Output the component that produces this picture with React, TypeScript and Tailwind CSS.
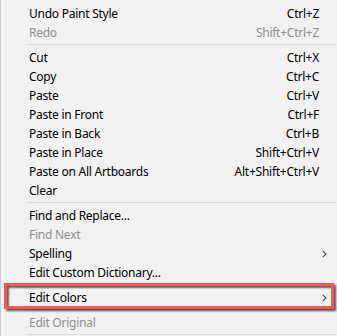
import React from "react";

type Item =
  | { kind: "sep" }
  | { kind: "item"; label: string; shortcut?: string; disabled?: boolean; sub?: boolean; highlight?: boolean };

const items: Item[] = [
  { kind: "item", label: "Undo Paint Style", shortcut: "Ctrl+Z" },
  { kind: "item", label: "Redo", shortcut: "Shift+Ctrl+Z", disabled: true },
  { kind: "sep" },
  { kind: "item", label: "Cut", shortcut: "Ctrl+X" },
  { kind: "item", label: "Copy", shortcut: "Ctrl+C" },
  { kind: "item", label: "Paste", shortcut: "Ctrl+V" },
  { kind: "item", label: "Paste in Front", shortcut: "Ctrl+F" },
  { kind: "item", label: "Paste in Back", shortcut: "Ctrl+B" },
  { kind: "item", label: "Paste in Place", shortcut: "Shift+Ctrl+V" },
  { kind: "item", label: "Paste on All Artboards", shortcut: "Alt+Shift+Ctrl+V" },
  { kind: "item", label: "Clear" },
  { kind: "sep" },
  { kind: "item", label: "Find and Replace..." },
  { kind: "item", label: "Find Next", disabled: true },
  { kind: "item", label: "Spelling", sub: true },
  { kind: "item", label: "Edit Custom Dictionary..." },
  { kind: "sep" },
  { kind: "item", label: "Edit Colors", sub: true, highlight: true },
  { kind: "sep" },
  { kind: "item", label: "Edit Original", disabled: true },
  { kind: "sep" },
];

function Chevron() {
  return (
    <svg width="5" height="8" viewBox="0 0 5 8" className="absolute right-[10px] top-1/2 -translate-y-1/2">
      <path d="M0.8 0.8 L4 4 L0.8 7.2" fill="none" stroke="#444" strokeWidth="1.1" />
    </svg>
  );
}

export default function App() {
  return (
    <div
      className="w-[337px] h-[336px] overflow-hidden bg-[#f2f2f2] border-l border-[#cfcfcf] pt-[4px]"
      style={{ fontFamily: '"Noto Sans", "Open Sans", sans-serif' }}
    >
      {items.map((it, i) =>
        it.kind === "sep" ? (
          <div key={i} className="h-[6px] pl-[26px] pt-[2px]">
            <div className="h-px bg-[#d9d9d9]" />
          </div>
        ) : (
          <div
            key={i}
            className={`relative h-[19px] flex items-center pl-[28px] pr-[18px] text-[12px] leading-[19px] tracking-[-0.25px] ${
              it.disabled ? "text-[#8f8f8f]" : "text-[#000]"
            }`}
          >
            <span className="flex-1 whitespace-nowrap">{it.label}</span>
            {it.shortcut && <span className="whitespace-nowrap">{it.shortcut}</span>}
            {it.sub && <Chevron />}
            {it.highlight && (
              <div className="absolute left-[3px] right-[3px] top-[-5px] bottom-[-2px] border-[3px] border-[#f25a50] shadow-[2px_2px_2px_rgba(0,0,0,0.65),inset_2px_2px_2px_rgba(0,0,0,0.6)]" />
            )}
          </div>
        )
      )}
    </div>
  );
}
